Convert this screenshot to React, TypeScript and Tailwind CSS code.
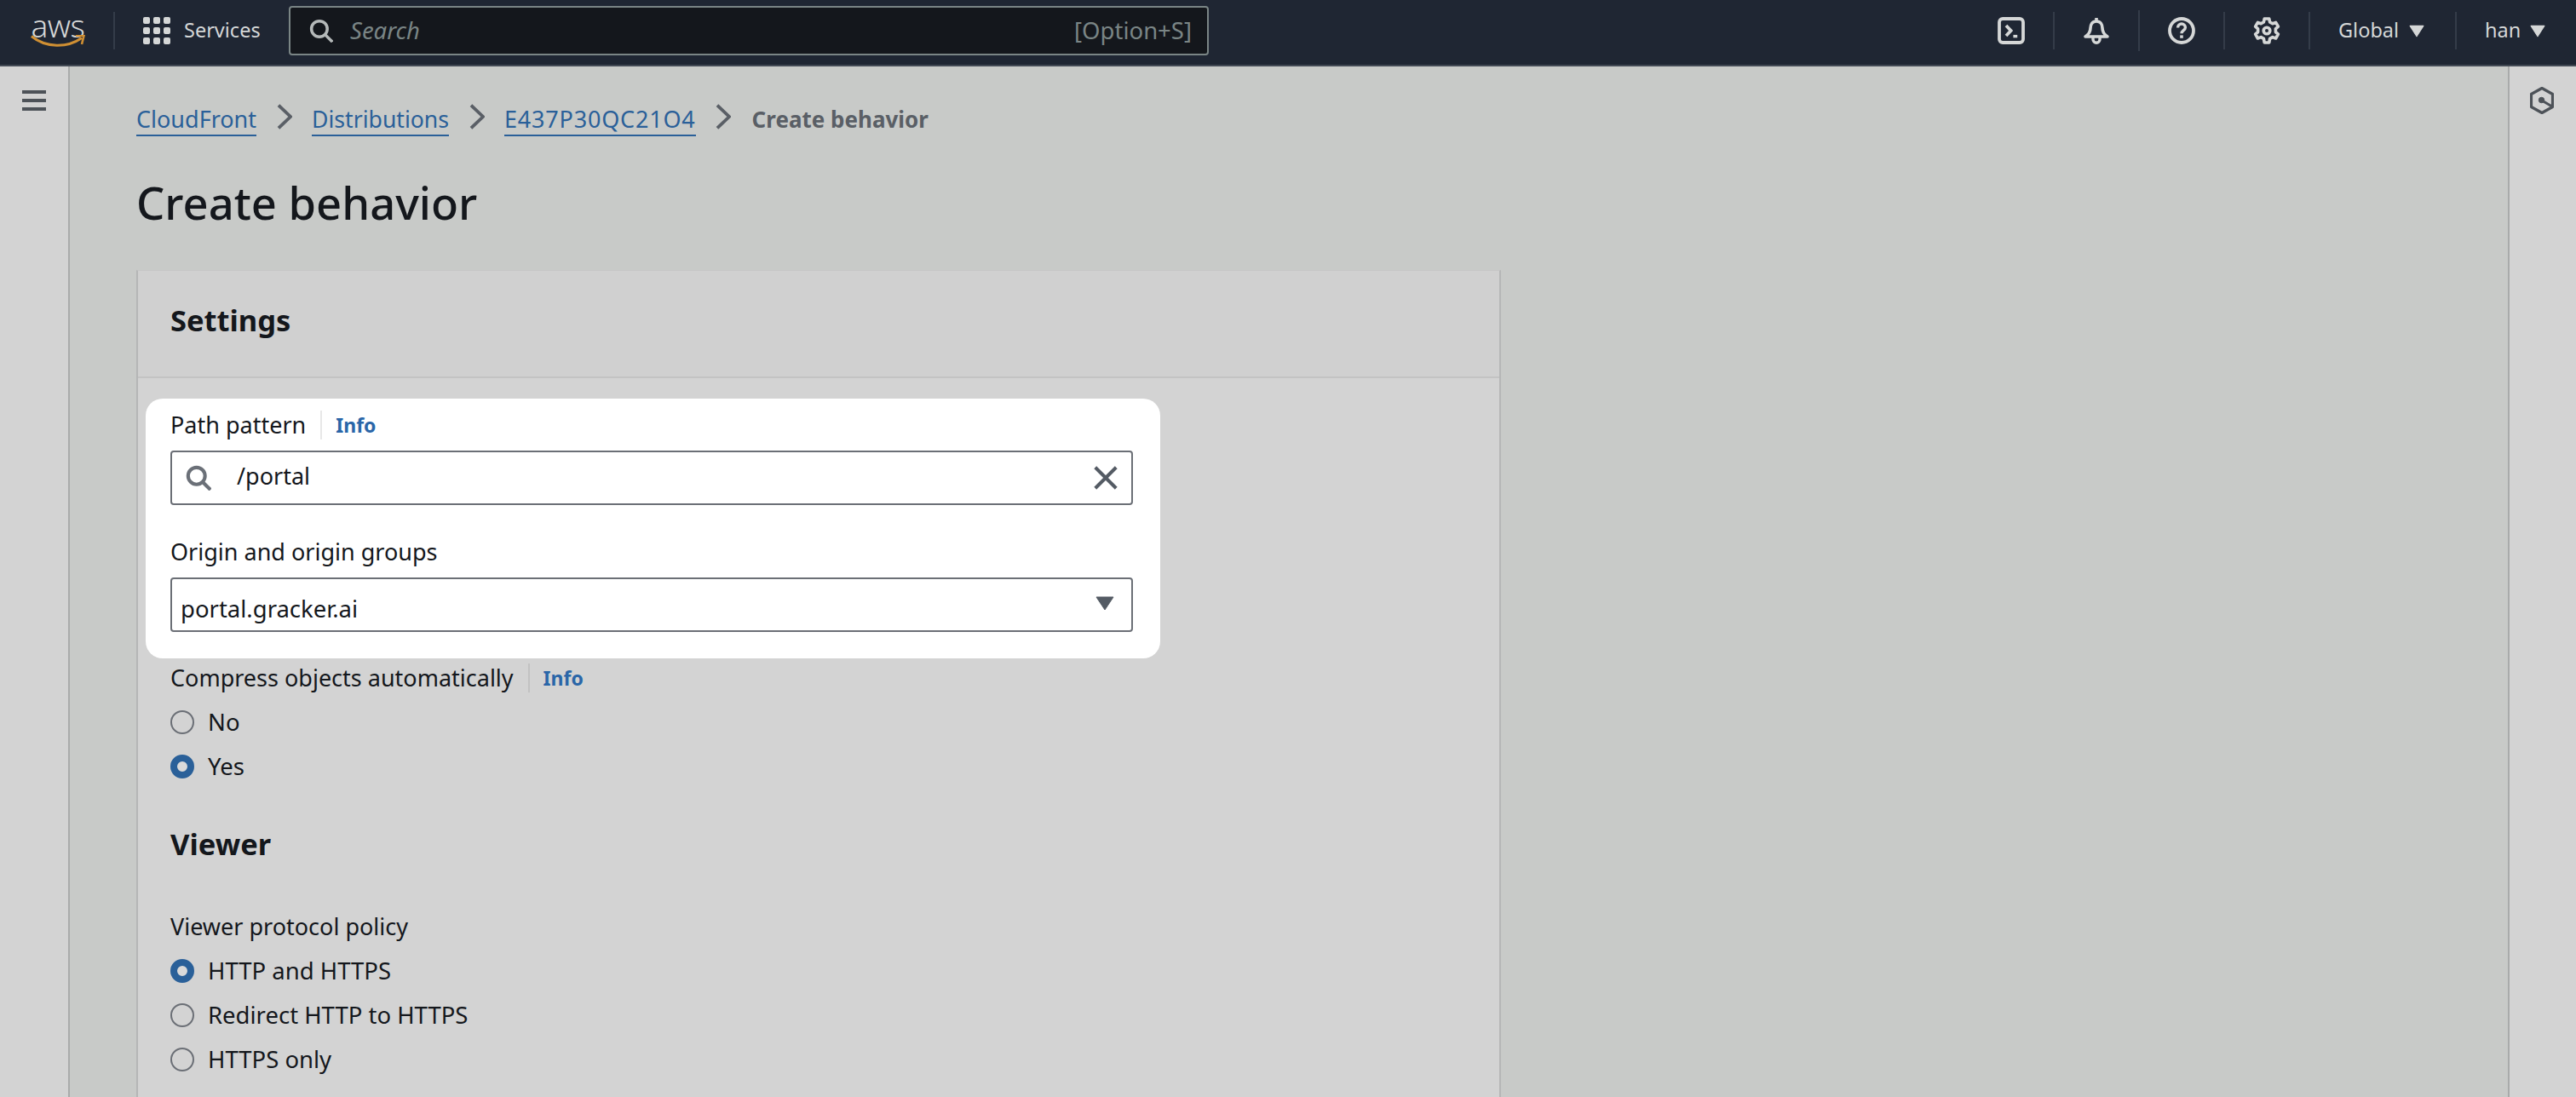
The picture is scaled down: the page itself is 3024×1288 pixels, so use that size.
const F = "font-['Noto_Sans',sans-serif]";

function Ico({ className, children, vb = "0 0 16 16" }: { className: string; children: React.ReactNode; vb?: string }) {
  return (
    <svg viewBox={vb} fill="none" stroke="currentColor" strokeWidth={2} className={className}>
      {children}
    </svg>
  );
}

function Caret({ className }: { className: string }) {
  return (
    <svg viewBox="0 0 16 16" className={className}>
      <path d="M1 3h14L8 14z" fill="currentColor" stroke="currentColor" strokeLinejoin="round" />
    </svg>
  );
}

function Sep({ h = "h-[44px]" }: { h?: string }) {
  return <div className={`w-[2px] ${h} bg-[#343c49]`} />;
}

function Crumb({ text, cls = "" }: { text: string; cls?: string }) {
  return (
    <>
      <span className={`text-[#2a6099] border-b-[2px] border-[#2a6099] leading-[36px] h-[38px] ${cls}`}>{text}</span>
      <Ico className="w-[18px] h-[30px] text-[#5a5f66]" vb="0 0 9 15">
        <path d="m1 .8 7 6.700-7 6.700" strokeWidth={1.9} />
      </Ico>
    </>
  );
}

function Radio({ label, on }: { label: string; on?: boolean }) {
  return (
    <div className="flex items-center h-[52px]">
      {on ? (
        <div className="w-[28px] h-[28px] rounded-full border-[8px] border-[#2a6099] bg-[#dadada]" />
      ) : (
        <div className="w-[28px] h-[28px] rounded-full border-[2px] border-[#6b6f76]" />
      )}
      <span className="ml-[16px] text-[27.500px] text-[#14171c]">{label}</span>
    </div>
  );
}

function Label({ text, info, infoCls }: { text: string; info?: boolean; infoCls?: string }) {
  return (
    <div className="flex items-center h-[36px] text-[27px] text-[#14171c]">
      <span>{text}</span>
      {info && (
        <>
          <div className={`ml-[17px] w-[2px] h-[34px] ${infoCls === "w" ? "bg-[#e8e8e8]" : "bg-[#c2c2c2]"}`} />
          <span className="ml-[16px] text-[23px] font-bold text-[#2a66a8]">Info</span>
        </>
      )}
    </div>
  );
}

export default function App() {
  return (
    <div className={`${F} w-[3024px] h-[1288px] overflow-hidden flex flex-col bg-[#c8cac8]`}>
      <header className="h-[78px] shrink-0 bg-[#1f2633] border-b-[2px] border-[#434a55] flex items-center pb-[4px] text-[#d5d7d7]">
        <div className="w-[64px] ml-[36px] h-[38px] flex flex-col items-center relative">
          <span className="text-[37px] leading-[26px] tracking-[-0.5px] text-[#d5d7d7] font-light">aws</span>
          <svg viewBox="0 0 64 15" className="w-[64px] h-[15px] absolute top-[24px] left-0" fill="none">
            <path d="M1 1.500c17 14 42 14 59 2" stroke="#cf8f33" strokeWidth={3.2} />
            <path d="M53 .8h9.500L60 11" stroke="#cf8f33" strokeWidth={2.6} />
          </svg>
        </div>
        <div className="ml-[33px]"><Sep /></div>
        <div className="ml-[33px] w-[32px] h-[32px] grid grid-cols-3 gap-[4px]">
          {Array.from({ length: 9 }).map((_, i) => (
            <div key={i} className="bg-[#d5d7d7] rounded-[2px]" />
          ))}
        </div>
        <span className="ml-[16px] text-[23.500px] w-[90px]">Services</span>
        <div className="ml-[33px] w-[1080px] h-[58px] bg-[#14171c] border-[2px] border-[#7a8585] rounded-[4px] flex items-center pl-[22px] pr-[18px] text-[#7a8585]">
          <Ico className="w-[28px] h-[28px] text-[#b5b9b9]">
            <circle cx="6.800" cy="6.800" r="5.300" />
            <path d="m10.500 10.500 5 5" />
          </Ico>
          <span className="ml-[20px] italic text-[27.500px]">Search</span>
          <span className="ml-auto text-[27.500px]">[Option+S]</span>
        </div>
        <div className="ml-auto flex items-center">
          <Ico className="w-[32px] h-[32px] text-[#d5d7d7]">
            <rect x="1" y="1" width="14" height="14" rx="2" strokeWidth={1.9} />
            <path d="m5 5 2.800 3L5 11" strokeWidth={1.9} />
            <path d="M9.200 11.300h2.400" strokeWidth={1.7} />
          </Ico>
          <div className="ml-[33px]"><Sep /></div>
          <Ico className="ml-[33px] w-[32px] h-[32px] text-[#d5d7d7]">
            <path d="M8 .5v2M8 2.500C5.500 2.500 4.500 4.500 4.500 6.500c0 2.500-1 3.700-3 5h13c-2-1.300-3-2.500-3-5 0-2-1-4-3.500-4Z" strokeWidth={1.8} strokeLinejoin="round" />
            <path d="M6 11.500v1.600a2 2 0 0 0 4 0v-1.600" strokeWidth={1.7} />
          </Ico>
          <div className="ml-[33px]"><Sep h="h-[48px]" /></div>
          <Ico className="ml-[33px] w-[32px] h-[32px] text-[#d5d7d7]">
            <circle cx="8" cy="8" r="7" strokeWidth={1.9} />
            <path d="M5.800 6.200C5.800 4.900 6.800 4 8 4s2.200.9 2.200 2.100c0 1.700-2.200 1.700-2.200 3.500" strokeWidth={1.7} />
            <path d="M8 10.700v1.700" strokeWidth={1.8} />
          </Ico>
          <div className="ml-[33px]"><Sep /></div>
          <Ico className="ml-[33px] w-[32px] h-[32px] text-[#d5d7d7]">
            <path d="M6.600 1h2.800l.4 2 1.600.9 1.900-.7 1.400 2.400-1.500 1.300v1.900l1.500 1.300-1.400 2.400-1.900-.7-1.600.9-.4 2.300H6.600l-.4-2.300-1.600-.9-1.900.7-1.400-2.400 1.500-1.300V6.900L1.300 5.600l1.400-2.400 1.900.7 1.600-.9Z" strokeWidth={1.8} strokeLinejoin="round" />
            <circle cx="8" cy="8" r="1.900" strokeWidth={1.8} />
          </Ico>
          <div className="ml-[33px]"><Sep /></div>
          <span className="ml-[33px] w-[70px] text-[23.500px] whitespace-nowrap">Global</span>
          <Caret className="ml-[13px] w-[18px] h-[18px] text-[#d5d7d7]" />
          <div className="ml-[36px]"><Sep /></div>
          <span className="ml-[33px] w-[40px] text-[23.500px] whitespace-nowrap">han</span>
          <Caret className="ml-[13px] mr-[36px] w-[18px] h-[18px] text-[#d5d7d7]" />
        </div>
      </header>

      <div className="flex-1 flex min-h-0">
        <aside className="w-[82px] shrink-0 bg-[#d3d3d3] border-r-[2px] border-[#a9abab] pt-[28px] pl-[26px]">
          <div className="w-[28px] h-[24px] flex flex-col justify-between">
            <div className="h-[4px] bg-[#4d5258]" />
            <div className="h-[4px] bg-[#4d5258]" />
            <div className="h-[4px] bg-[#4d5258]" />
          </div>
        </aside>

        <main className="flex-1 pl-[78px] min-w-0">
          <nav className="mt-[44px] h-[38px] flex items-start gap-x-[23.500px] text-[27px]">
            <Crumb text="CloudFront" />
            <Crumb text="Distributions" cls="text-[26.600px]" />
            <Crumb text="E437P30QC21O4" cls="tracking-[0.8px]" />
            <span className="ml-[1px] font-bold text-[26px] text-[#5a5f66] leading-[36px]">Create behavior</span>
          </nav>
          <h1 className="mt-[40px] h-[76px] leading-[76px] text-[52.500px] font-medium text-[#14171c]">Create behavior</h1>

          <section className="mt-[41px] w-[1602px] h-[1000px] bg-[#d3d3d3] border-x-[2px] border-t-[1px] border-x-[#b5b6b6] border-t-[#c6c6c6]">
            <div className="h-[126px] bg-[#d0d0d0] border-b-[2px] border-[#c3c3c3] pl-[38px] pt-[33px]">
              <h2 className="text-[34.500px] leading-[50px] font-bold text-[#14171c]">Settings</h2>
            </div>
            <div className="mt-[24px] ml-[9px] w-[1191px] h-[305px] bg-white rounded-[20px] pl-[29px] pr-[32px] pt-[13px]">
              <Label text="Path pattern" info infoCls="w" />
              <div className="mt-[12px] h-[64px] border-[2px] border-[#6b6f76] rounded-[4px] flex items-center pl-[16px] pr-[16px]">
                <Ico className="w-[30px] h-[30px] text-[#6b7078]">
                  <circle cx="6.800" cy="6.800" r="5.300" strokeWidth={2.200} />
                  <path d="m10.500 10.500 5 5" strokeWidth={2.200} />
                </Ico>
                <span className="ml-[30px] text-[27px] text-[#14171c] -mt-[4px]">/portal</span>
                <Ico className="ml-auto w-[28px] h-[28px] text-[#545b64]">
                  <path d="m1 1 14 14M15 1 1 15" strokeWidth={2.300} />
                </Ico>
              </div>
              <div className="mt-[37px]"><Label text="Origin and origin groups" /></div>
              <div className="mt-[12px] h-[64px] border-[2px] border-[#6b6f76] rounded-[4px] flex items-center pl-[10px] pr-[20px]">
                <span className="text-[27.500px] text-[#14171c] mt-[10px]">portal.gracker.ai</span>
                <svg viewBox="0 0 22 17" className="ml-auto w-[22px] h-[17px] -mt-[4px] text-[#545b64]">
                  <path d="M1 1h20L11 16z" fill="currentColor" stroke="currentColor" strokeLinejoin="round" />
                </svg>
              </div>
            </div>
            <div className="pl-[38px]">
              <div className="mt-[5px]"><Label text="Compress objects automatically" info /></div>
              <div className="mt-[8px]">
                <Radio label="No" />
                <Radio label="Yes" on />
              </div>
              <h2 className="mt-[40px] text-[34.500px] leading-[50px] font-bold text-[#14171c]">Viewer</h2>
              <div className="mt-[54px]"><Label text="Viewer protocol policy" /></div>
              <div className="mt-[8px]">
                <Radio label="HTTP and HTTPS" on />
                <Radio label="Redirect HTTP to HTTPS" />
                <Radio label="HTTPS only" />
              </div>
            </div>
          </section>
        </main>

        <aside className="w-[80px] shrink-0 bg-[#d3d3d3] border-l-[2px] border-[#a9abab] pt-[24px] pl-[24px]">
          <svg viewBox="0 0 28 32" fill="none" stroke="#4d5258" className="w-[28px] h-[32px]">
            <path d="M14 1.500 26.500 8.500v15L14 30.500 1.500 23.500v-15Z" strokeWidth={3.200} strokeLinejoin="round" />
            <circle cx="13.500" cy="15.500" r="3.200" fill="#4d5258" strokeWidth={1} />
            <path d="m14 16 11 6.500" strokeWidth={3} />
          </svg>
        </aside>
      </div>
    </div>
  );
}
